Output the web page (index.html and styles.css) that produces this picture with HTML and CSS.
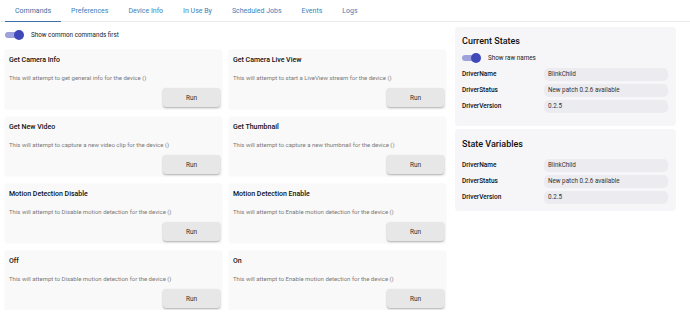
FILE: index.html
```html
<!DOCTYPE html>
<html lang="en">
<head>
    <meta charset="UTF-8">
    <title>Device Commands</title>
    <link rel="stylesheet" href="styles.css">
</head>
<body>
    <nav class="tabs">
        <a class="tab active">Commands</a>
        <a class="tab">Preferences</a>
        <a class="tab">Device Info</a>
        <a class="tab">In Use By</a>
        <a class="tab">Scheduled Jobs</a>
        <a class="tab">Events</a>
        <a class="tab">Logs</a>
    </nav>

    <div class="main">
        <div class="commands">
            <label class="switch-row">
                <span class="switch"><span class="knob"></span></span>
                Show common commands first
            </label>

            <div class="grid">
                <div class="card">
                    <div class="card-title">Get Camera Info</div>
                    <div class="card-desc">This will attempt to get general info for the device ()</div>
                    <button class="run">Run</button>
                </div>
                <div class="card">
                    <div class="card-title">Get Camera Live View</div>
                    <div class="card-desc">This will attempt to start a LiveView stream for the device ()</div>
                    <button class="run">Run</button>
                </div>
                <div class="card">
                    <div class="card-title">Get New Video</div>
                    <div class="card-desc">This will attempt to capture a new video clip for the device ()</div>
                    <button class="run">Run</button>
                </div>
                <div class="card">
                    <div class="card-title">Get Thumbnail</div>
                    <div class="card-desc">This will attempt to capture a new thumbnail for the device ()</div>
                    <button class="run">Run</button>
                </div>
                <div class="card">
                    <div class="card-title">Motion Detection Disable</div>
                    <div class="card-desc">This will attempt to Disable motion detection for the device ()</div>
                    <button class="run">Run</button>
                </div>
                <div class="card">
                    <div class="card-title">Motion Detection Enable</div>
                    <div class="card-desc">This will attempt to Enable motion detection for the device ()</div>
                    <button class="run">Run</button>
                </div>
                <div class="card">
                    <div class="card-title">Off</div>
                    <div class="card-desc">This will attempt to Disable motion detection for the device ()</div>
                    <button class="run">Run</button>
                </div>
                <div class="card">
                    <div class="card-title">On</div>
                    <div class="card-desc">This will attempt to Enable motion detection for the device ()</div>
                    <button class="run">Run</button>
                </div>
            </div>
        </div>

        <div class="side">
            <div class="panel">
                <h2>Current States</h2>
                <label class="switch-row small">
                    <span class="switch"><span class="knob"></span></span>
                    Show raw names
                </label>
                <div class="state"><span class="name">DriverName</span><span class="value">BlinkChild</span></div>
                <div class="state"><span class="name">DriverStatus</span><span class="value">New patch 0.2.6 available</span></div>
                <div class="state"><span class="name">DriverVersion</span><span class="value">0.2.5</span></div>
            </div>
            <div class="panel vars">
                <h2>State Variables</h2>
                <div class="state"><span class="name">DriverName</span><span class="value">BlinkChild</span></div>
                <div class="state"><span class="name">DriverStatus</span><span class="value">New patch 0.2.6 available</span></div>
                <div class="state"><span class="name">DriverVersion</span><span class="value">0.2.5</span></div>
            </div>
        </div>
    </div>
</body>
</html>
```
FILE: styles.css
```css
body {
    margin: 0;
    font-family: 'Roboto', 'Liberation Sans', sans-serif;
    background-color: #fff;
    color: #222;
}
.tabs {
    display: flex;
    padding-left: 5px;
    height: 22px;
    border-bottom: 1px solid #ececec;
    box-sizing: border-box;
}
.tab {
    font-size: 7px;
    color: #3d7fb8;
    padding: 0 10px;
    line-height: 23px;
    height: 22px;
    box-sizing: border-box;
}
.tab.active {
    border-bottom: 1px solid #3d6fa8;
    color: #3a6f9e;
}
.main {
    display: flex;
    padding-left: 5px;
}
.commands {
    width: 441px;
}
.switch-row {
    display: flex;
    align-items: center;
    font-size: 6.3px;
    color: #222;
    height: 14px;
    margin-top: 6px;
    margin-bottom: 8px;
}
.switch {
    position: relative;
    width: 16px;
    height: 6px;
    border-radius: 3px;
    background-color: #9da1dc;
    margin-right: 10px;
}
.knob {
    position: absolute;
    right: -3px;
    top: -2px;
    width: 10px;
    height: 10px;
    border-radius: 50%;
    background-color: #3f48b8;
}
.grid {
    display: grid;
    grid-template-columns: 217px 217px;
    grid-auto-rows: 59px;
    column-gap: 7px;
    row-gap: 8px;
}
.card {
    background-color: #f9f9f9;
    border-radius: 3px;
    box-shadow: 0 0 2px rgba(0, 0, 0, 0.07);
    padding: 5px 2px 2px 4px;
    box-sizing: border-box;
    display: flex;
    flex-direction: column;
}
.card-title {
    font-size: 7px;
    font-weight: 500;
    color: #111;
    line-height: 10px;
}
.card-desc {
    font-size: 6px;
    color: #7a7a7a;
    margin-top: 9px;
    line-height: 8px;
}
.run {
    margin-top: auto;
    align-self: flex-end;
    width: 57px;
    height: 19px;
    border: none;
    border-radius: 3px;
    background-color: #e7e7e7;
    box-shadow: 0 1px 2px rgba(0, 0, 0, 0.3);
    font-family: inherit;
    font-size: 6.5px;
    color: #333;
    padding: 0;
}
.side {
    width: 221px;
    margin-left: 9px;
    margin-top: 5px;
}
.panel {
    background-color: #f6f6f9;
    border-radius: 4px;
    padding: 7px 8px 8px 7px;
    box-sizing: border-box;
    height: 99px;
}
.panel.vars {
    margin-top: 3px;
    height: 82px;
    padding-top: 8px;
}
.panel h2 {
    font-size: 9px;
    font-weight: 500;
    margin: 0 0 3px;
    line-height: 14px;
    color: #111;
}
.panel .switch-row {
    margin: 0 0 1px;
    height: 14px;
}
.panel.vars h2 {
    margin-bottom: 6px;
}
.state {
    display: flex;
    align-items: center;
    height: 16px;
}
.name {
    width: 82px;
    font-size: 6.5px;
    font-weight: 500;
    color: #111;
}
.value {
    flex: 1;
    height: 13px;
    line-height: 13px;
    border-radius: 5px;
    background-color: #ebebf0;
    font-size: 6.3px;
    color: #333;
    padding-left: 4px;
}
```
